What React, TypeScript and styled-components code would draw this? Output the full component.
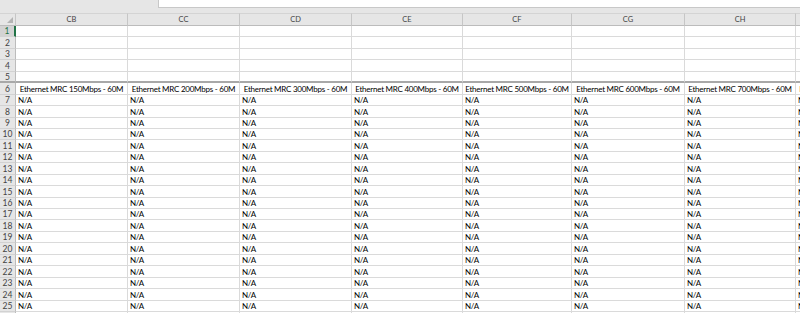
import * as React from 'react';
import styled, { createGlobalStyle } from 'styled-components';

const GlobalStyle = createGlobalStyle`
  html, body {
    margin: 0;
    padding: 0;
    background: #ffffff;
    overflow: hidden;
  }
`;

const COLUMNS = [
  { name: 'CB', width: 112, speed: '150Mbps' },
  { name: 'CC', width: 112, speed: '200Mbps' },
  { name: 'CD', width: 112, speed: '300Mbps' },
  { name: 'CE', width: 111, speed: '400Mbps' },
  { name: 'CF', width: 109, speed: '500Mbps' },
  { name: 'CG', width: 113, speed: '600Mbps' },
  { name: 'CH', width: 111, speed: '700Mbps' },
  { name: 'CI', width: 111, speed: '800Mbps' },
];

const ROW_COUNT = 26;
const ROW_PITCH = 11.44;
const HEADER_ROW = 6;
const FREEZE_AFTER = 5;

const rowHeights = Array.from({ length: ROW_COUNT }, (_, i) =>
  Math.round((i + 1) * ROW_PITCH) - Math.round(i * ROW_PITCH),
);

const Sheet = styled.div`
  width: 800px;
  height: 313px;
  overflow: hidden;
  background: #ffffff;
  font-family: Lato, 'Liberation Sans', sans-serif;
`;

const TopBar = styled.div`
  display: flex;
  height: 13px;
  background: #e6e6e6;
`;

const FormulaBox = styled.div`
  flex: 1;
  height: 7px;
  margin-left: 158px;
  background: #ffffff;
  border-left: 1px solid #c8c8c8;
  border-bottom: 1px solid #c8c8c8;
`;

const Grid = styled.div<{ $cols: string; $rows: string }>`
  display: grid;
  grid-template-columns: ${(p) => p.$cols};
  grid-template-rows: ${(p) => p.$rows};
`;

const Corner = styled.div`
  position: relative;
  background: #e6e6e6;
  border-right: 1px solid #c6c6c6;
  border-bottom: 1px solid #bcbcbc;
  border-top: 1px solid #d4d4d4;

  &::after {
    content: '';
    position: absolute;
    right: 2px;
    bottom: 2px;
    width: 0;
    height: 0;
    border-left: 6px solid transparent;
    border-bottom: 6px solid #b4b4b4;
  }
`;

const ColHeader = styled.div`
  display: flex;
  align-items: center;
  justify-content: center;
  background: #e6e6e6;
  border-top: 1px solid #d4d4d4;
  border-right: 1px solid #c6c6c6;
  border-bottom: 1px solid #bcbcbc;
  font-size: 7.5px;
  color: #444444;
  overflow: hidden;
`;

const RowHeader = styled.div<{ $active?: boolean; $freeze?: boolean }>`
  display: flex;
  align-items: center;
  justify-content: center;
  background: ${(p) => (p.$active ? '#d3d3d3' : '#e6e6e6')};
  color: ${(p) => (p.$active ? '#217346' : '#444444')};
  border-right: ${(p) => (p.$active ? '2px solid #217346' : '1px solid #bcbcbc')};
  border-bottom: ${(p) => (p.$freeze ? '2px solid #a8a8a8' : '1px solid #d2d2d2')};
  font-size: 8.5px;
  box-sizing: border-box;
  overflow: hidden;
`;

const Cell = styled.div<{ $center?: boolean; $freeze?: boolean }>`
  display: flex;
  align-items: center;
  justify-content: ${(p) => (p.$center ? 'center' : 'flex-start')};
  padding-left: ${(p) => (p.$center ? '0' : '2px')};
  border-right: 1px solid #dadada;
  border-bottom: ${(p) => (p.$freeze ? '2px solid #a8a8a8' : '1px solid #dadada')};
  box-sizing: border-box;
  font-size: 8px;
  letter-spacing: -0.24px;
  color: #000000;
  white-space: nowrap;
  overflow: hidden;
`;

const cellText = (row: number, speed: string) => {
  if (row === HEADER_ROW) return `Ethernet MRC ${speed} - 60M`;
  if (row > HEADER_ROW && row <= 25) return 'N/A';
  return '';
};

export default function App() {
  const cols = `16px ${COLUMNS.map((c) => `${c.width}px`).join(' ')}`;
  const rows = `13px ${rowHeights.map((h) => `${h}px`).join(' ')}`;

  return (
    <Sheet>
      <GlobalStyle />
      <TopBar>
        <FormulaBox />
      </TopBar>
      <Grid $cols={cols} $rows={rows}>
        <Corner />
        {COLUMNS.map((c) => (
          <ColHeader key={c.name}>{c.name}</ColHeader>
        ))}
        {rowHeights.map((_, i) => {
          const row = i + 1;
          const freeze = row === FREEZE_AFTER;
          return (
            <React.Fragment key={row}>
              <RowHeader $active={row === 1} $freeze={freeze}>
                {row}
              </RowHeader>
              {COLUMNS.map((c) => (
                <Cell key={c.name} $center={row === HEADER_ROW} $freeze={freeze}>
                  {cellText(row, c.speed)}
                </Cell>
              ))}
            </React.Fragment>
          );
        })}
      </Grid>
    </Sheet>
  );
}
